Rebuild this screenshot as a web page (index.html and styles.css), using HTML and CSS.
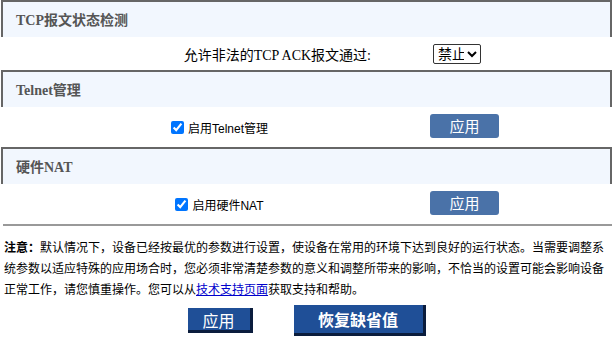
FILE: index.html
```html
<!DOCTYPE html>
<html lang="zh-CN">
<head>
  <meta charset="UTF-8" />
  <title>高级设置</title>
  <link rel="stylesheet" href="styles.css">
</head>
<body>
  <div class="section-title">TCP报文状态检测</div>
  <div class="row row-select">
    <span class="label-serif">允许非法的TCP ACK报文通过:</span>
    <select class="ack-select">
      <option>禁止</option>
      <option>允许</option>
    </select>
  </div>

  <div class="section-title">Telnet管理</div>
  <div class="row row-check">
    <label class="check"><input type="checkbox" checked> 启用Telnet管理</label>
    <button class="btn-small">应用</button>
  </div>

  <div class="section-title">硬件NAT</div>
  <div class="row row-check">
    <label class="check"><input type="checkbox" checked> 启用硬件NAT</label>
    <button class="btn-small">应用</button>
  </div>

  <hr class="divider">

  <p class="note"><b>注意：</b>默认情况下，设备已经按最优的参数进行设置，使设备在常用的环境下达到良好的运行状态。当需要调整系统参数以适应特殊的应用场合时，您必须非常清楚参数的意义和调整所带来的影响，不恰当的设置可能会影响设备正常工作，请您慎重操作。您可以从<a href="#">技术支持页面</a>获取支持和帮助。</p>

  <div class="actions">
    <button class="btn-main">应用</button>
    <button class="btn-main btn-wide">恢复缺省值</button>
  </div>
</body>
</html>
```

FILE: styles.css
```css
body {
  margin: 0;
  padding: 0 2px 0 1px;
  font-family: "Liberation Sans", "Noto Sans CJK SC", sans-serif;
  font-size: 12px;
  color: #000;
  background: #fff;
}
.section-title {
  height: 37px;
  box-sizing: border-box;
  border: 2px solid #666;
  border-width: 2px 2px 0 2px;
  background-color: #f2f7fe;
  padding-left: 13px;
  line-height: 38px;
  font-family: "Liberation Serif", "Noto Sans CJK SC", serif;
  font-weight: bold;
  font-size: 14px;
  color: #555;
}
.row {
  display: grid;
  align-items: center;
}
.row-select {
  height: 33px;
  grid-template-columns: 432px auto;
}
.label-serif {
  justify-self: end;
  padding-right: 62px;
  font-family: "Liberation Serif", "Noto Sans CJK SC", serif;
  font-size: 14px;
}
.ack-select {
  justify-self: start;
  width: 48px;
  height: 20px;
  font-family: "Liberation Sans", "Noto Sans CJK SC", sans-serif;
  font-size: 14px;
  padding: 0;
  border: 1px solid #333;
  border-radius: 2px;
  background: #fff;
}
.row-check {
  height: 40px;
  grid-template-columns: 429px auto;
}
.check {
  justify-self: center;
  padding-left: 8px;
  display: flex;
  align-items: center;
  gap: 2px;
}
.check input {
  margin: 0 2px 0 0;
  width: 13px;
  height: 13px;
}
.btn-small {
  justify-self: start;
  width: 69px;
  height: 24px;
  margin-top: -3px;
  border: none;
  border-radius: 3px;
  background-color: #4a72a8;
  color: #fff;
  font-family: "Noto Sans CJK SC", sans-serif;
  font-size: 15px;
  padding: 0;
}
.divider {
  margin: 0 0 0 2px;
  border: none;
  border-top: 2px solid #999;
}
.note {
  margin: 12px 0 0 3px;
  line-height: 21px;
  font-size: 12px;
}
.note a {
  color: #00c;
}
.actions {
  display: flex;
  justify-content: center;
  align-items: center;
  gap: 41px;
  margin-top: 4px;
}
.btn-main {
  width: 65px;
  height: 25px;
  padding: 0;
  border: none;
  border-right: 3px solid #0b1d3d;
  border-bottom: 3px solid #0b1d3d;
  background-color: #1f4f97;
  color: #fff;
  font-family: "Noto Sans CJK SC", sans-serif;
  font-size: 16px;
}
.btn-wide {
  width: 132px;
  height: 31px;
  font-weight: bold;
}
```
